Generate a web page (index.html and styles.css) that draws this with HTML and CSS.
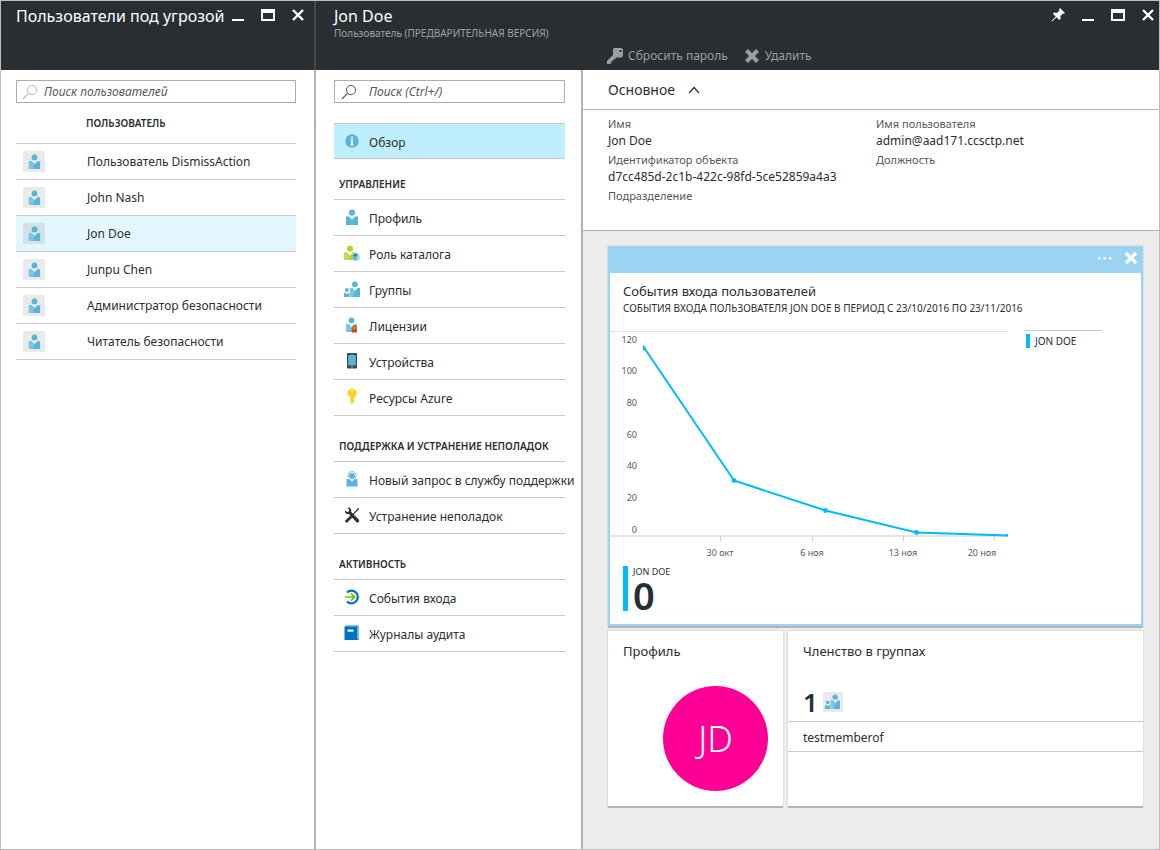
FILE: index.html
```
<!DOCTYPE html>
<html lang="ru">
<head>
<meta charset="utf-8">
<title>Jon Doe</title>
<link rel="stylesheet" href="styles.css">
</head>
<body>
<svg class="sprite" aria-hidden="true">
  <symbol id="user" viewBox="0 0 16 16">
    <circle cx="8" cy="3.6" r="3.1" fill="#59b4d9"/>
    <path d="M2 7.6h3l3 3.2 3-3.2h3V16H2z" fill="#59b4d9"/>
    <path d="M2 7.6h3l3 3.2L6.6 16H2z" fill="#7cc4e1"/>
  </symbol>
  <symbol id="profile" viewBox="0 0 16 16">
    <circle cx="8" cy="3.6" r="3.1" fill="#59b4d9"/>
    <path d="M2 7.6h3l3 3.2 3-3.2h3V16H2z" fill="#59b4d9"/>
  </symbol>
  <symbol id="group" viewBox="0 0 16 16">
    <circle cx="10.9" cy="3.3" r="2.9" fill="#59b4d9"/>
    <path d="M6.2 7h2.2l2.6 3 2.6-3H16v9H6.2z" fill="#59b4d9"/>
    <path d="M6.2 7h2.2l2.6 3-1.6 6H6.2z" fill="#7cc4e1"/>
    <circle cx="2.9" cy="9" r="1.9" fill="#59b4d9"/>
    <path d="M0 11.7h1.6l1.3 1.5 1.3-1.5h1.3V16H0z" fill="#59b4d9"/>
  </symbol>
  <symbol id="search" viewBox="0 0 16 16">
    <circle cx="10" cy="6" r="4.6" fill="none" stroke="currentColor"/>
    <path d="M6.6 9.4 1 15" fill="none" stroke="currentColor" stroke-width="1.2"/>
  </symbol>
  <symbol id="minimize" viewBox="0 0 14 14"><path d="M1 11h12v2H1z" fill="currentColor"/></symbol>
  <symbol id="maximize" viewBox="0 0 14 14"><path fill-rule="evenodd" d="M0 1h14v12H0zM2 5v6h10V5z" fill="currentColor"/></symbol>
  <symbol id="close" viewBox="0 0 14 14"><path d="m2 2 10 10M12 2 2 12" stroke="currentColor" stroke-width="2.4"/></symbol>
</svg>

<div class="portal">
  <section class="blade blade-users">
    <header class="blade-header">
      <div class="title-row">
        <h1 class="title">Пользователи под угрозой</h1>
        <div class="window-buttons">
          <button type="button" aria-label="Свернуть"><svg><use href="#minimize"/></svg></button>
          <button type="button" aria-label="Развернуть"><svg><use href="#maximize"/></svg></button>
          <button type="button" aria-label="Закрыть"><svg><use href="#close"/></svg></button>
        </div>
      </div>
    </header>
    <div class="users-body">
      <label class="search search-muted"><svg><use href="#search"/></svg><input type="text" placeholder="Поиск пользователей" aria-label="Поиск пользователей"></label>
      <table class="users">
        <thead><tr><td></td><th scope="col">ПОЛЬЗОВАТЕЛЬ</th></tr></thead>
        <tbody>
          <tr><td><span class="avatar"><svg><use href="#user"/></svg></span></td><td>Пользователь DismissAction</td></tr>
          <tr><td><span class="avatar"><svg><use href="#user"/></svg></span></td><td>John Nash</td></tr>
          <tr class="selected"><td><span class="avatar"><svg><use href="#user"/></svg></span></td><td>Jon Doe</td></tr>
          <tr><td><span class="avatar"><svg><use href="#user"/></svg></span></td><td>Junpu Chen</td></tr>
          <tr><td><span class="avatar"><svg><use href="#user"/></svg></span></td><td>Администратор безопасности</td></tr>
          <tr><td><span class="avatar"><svg><use href="#user"/></svg></span></td><td>Читатель безопасности</td></tr>
        </tbody>
      </table>
    </div>
  </section>

  <section class="blade blade-user">
    <header class="blade-header">
      <div class="title-row">
        <div>
          <h1 class="title">Jon Doe</h1>
          <p class="subtitle">Пользователь (ПРЕДВАРИТЕЛЬНАЯ ВЕРСИЯ)</p>
        </div>
        <div class="window-buttons">
          <button type="button" aria-label="Закрепить"><svg viewBox="0 0 14 14"><path fill="currentColor" d="M9 0l5 5-1.2.8-.8-.4-2.600 2.600.3 2.600-1.300 1.300L5.500 9.200 1 13.400l-.5-.4 4.200-4.500L1.900 5.800l1.300-1.300 2.700.4L8.500 2.200 8.200 1z"/></svg></button>
          <button type="button" aria-label="Свернуть"><svg><use href="#minimize"/></svg></button>
          <button type="button" aria-label="Развернуть"><svg><use href="#maximize"/></svg></button>
          <button type="button" aria-label="Закрыть"><svg><use href="#close"/></svg></button>
        </div>
      </div>
      <div class="commands">
        <button type="button"><svg viewBox="0 0 16 16"><path fill="currentColor" fill-rule="evenodd" d="M7 0h7.500L16 1.500V8l-1.500 1.500H9.500L7.500 11.500H6V13H4.500v1.500L3 16H0v-3l6-6V1zM12.500 2v2h2V2z"/></svg>Сбросить пароль</button>
        <button type="button"><svg viewBox="0 0 16 16"><path d="m2.500 2.500 11 11m0-11-11 11" stroke="currentColor" stroke-width="4"/></svg>Удалить</button>
      </div>
    </header>

    <div class="blade-body">
      <nav class="menu">
        <label class="search"><svg><use href="#search"/></svg><input type="text" placeholder="Поиск (Ctrl+/)" aria-label="Поиск"></label>
        <ul class="menu-top">
          <li><a href="#" class="active"><svg viewBox="0 0 16 16"><circle cx="8" cy="8" r="6.700" fill="#59b4d9"/><path fill="#e6f7fd" d="M7 3.600h2v1.800H7zM6.200 6.600H9v4.800h1v1H6v-1h1V7.600h-.8z"/></svg>Обзор</a></li>
        </ul>
        <h2>УПРАВЛЕНИЕ</h2>
        <ul>
          <li><a href="#"><svg><use href="#profile"/></svg>Профиль</a></li>
          <li><a href="#"><svg viewBox="0 0 16 16"><circle cx="6" cy="3.600" r="3.100" fill="#b8d432"/><path d="M.3 7.600h3L6 10.800l2.700-3.200h3V15H.3z" fill="#b8d432"/><path d="M.3 7.600h3L6 10.800 4.500 15H.3z" fill="#c5dc55"/><circle cx="12.300" cy="12.200" r="3.500" fill="#a0d3f0"/><path d="M9 11.200 12.300 12v3.600A3.500 3.500 0 0 1 9 11.200z" fill="#59b4d9"/><path d="M9 11a3.500 3.500 0 0 1 5-2.200L12.300 12z" fill="#1e88c9"/></svg>Роль каталога</a></li>
          <li><a href="#"><svg><use href="#group"/></svg>Группы</a></li>
          <li><a href="#"><svg viewBox="0 0 16 16"><circle cx="7.500" cy="3.300" r="2.900" fill="#59b4d9"/><path d="M2 7.300h3l2.500 3 2.500-3h3V15H2z" fill="#59b4d9"/><path d="M2 7.300h3l2.500 3L6.100 15H2z" fill="#7cc4e1"/><path d="M8.300 12h4.400v4l-2.200-1-2.200 1z" fill="#ba4316"/><circle cx="10.500" cy="11" r="2.400" fill="#dd5900"/><circle cx="10.500" cy="11" r="1.200" fill="#ff8c00"/></svg>Лицензии</a></li>
          <li><a href="#"><svg viewBox="0 0 16 16"><rect x="3" width="10" height="15.500" rx=".8" fill="#3e4347"/><path d="M4.200 2h7.600v10.500H4.200z" fill="#59b4d9"/><path d="M6.500.7h3v.5h-3zM7 13.600h2v1H7z" fill="#a0a1a2"/></svg>Устройства</a></li>
          <li><a href="#"><svg viewBox="0 0 16 16"><path fill="#fcd116" fill-rule="evenodd" d="M6.300 0h3.400L12.500 2.800v3L10.300 8.300v1.200l-.8.800.8.800-.8.900.8.800-2 2.300L6.500 14V8.300L3.500 5.800v-3zM7 1.200v1.300h2V1.200z"/></svg>Ресурсы Azure</a></li>
        </ul>
        <h2 class="spaced">ПОДДЕРЖКА И УСТРАНЕНИЕ НЕПОЛАДОК</h2>
        <ul>
          <li><a href="#"><svg viewBox="0 0 16 16"><path d="M2.500 8h3L8 10.500 10.500 8h3v7.500h-11z" fill="#59b4d9"/><circle cx="8" cy="5" r="2.900" fill="#59b4d9"/><path d="M4 6.500V4.200a4 3.700 0 0 1 8 0v2.100L8.500 8" fill="none" stroke="#7cc4e1"/></svg>Новый запрос в службу поддержки</a></li>
          <li><a href="#"><svg viewBox="0 0 16 16"><path d="M14.300.8 15.300 2 8.500 8.700l-.8-.8z" fill="#3e4347"/><path d="M7 8.200 8.800 10 3.300 15.500l-2-.1-.1-1.900z" fill="#292e32"/><path d="M3.500.6 5.700.7 7.200 2.600l-.1 2.200 8 8.300v1.500l-1 .8h-1.300L4.900 7.100 2.600 7 1 5.200l.1-1.700 2 1.600 1.700-.5.400-1.700z" fill="#292e32"/></svg>Устранение неполадок</a></li>
        </ul>
        <h2 class="spaced">АКТИВНОСТЬ</h2>
        <ul>
          <li><a href="#"><svg viewBox="0 0 16 16"><path d="M3 3.600a6.300 6.300 0 1 1 0 8.800" fill="none" stroke="#0072c6" stroke-width="2.200"/><path d="M1 8h9.500M7 4.300 10.700 8 7 11.700" fill="none" stroke="#7fba00" stroke-width="1.700"/></svg>События входа</a></li>
          <li><a href="#"><svg viewBox="0 0 16 16"><path d="M2 .5h12.500V15H.5V2z" fill="#0072c6"/><path d="M2 1.200h11.500V14" fill="none" stroke="#a9cce8" stroke-width=".7"/><path d="M3.500 4.500h6v2.200h-6z" fill="#fff"/></svg>Журналы аудита</a></li>
        </ul>
      </nav>

      <main class="content">
        <section class="essentials">
          <h2><button type="button">Основное<svg viewBox="0 0 12 12"><path d="m1 9 5-5.500L11 9" fill="none" stroke="currentColor" stroke-width="1.200"/></svg></button></h2>
          <div class="fields">
            <dl>
              <div><dt>Имя</dt><dd>Jon Doe</dd></div>
              <div><dt>Идентификатор объекта</dt><dd>d7cc485d-2c1b-422c-98fd-5ce52859a4a3</dd></div>
              <div><dt>Подразделение</dt><dd></dd></div>
            </dl>
            <dl>
              <div><dt>Имя пользователя</dt><dd>admin@aad171.ccsctp.net</dd></div>
              <div><dt>Должность</dt><dd></dd></div>
            </dl>
          </div>
        </section>

        <div class="tiles">
          <article class="tile tile-chart">
            <div class="tile-bar">
              <button type="button" aria-label="Ещё"><svg viewBox="0 0 14 14"><path fill="currentColor" d="M0 6h2.400v2.400H0zM5.500 6h2.400v2.400H5.500zM11 6h2.400v2.400H11z"/></svg></button>
              <button type="button" aria-label="Закрыть плитку"><svg viewBox="0 0 14 14"><path d="m2 2 10 10M12 2 2 12" stroke="currentColor" stroke-width="3.200"/></svg></button>
            </div>
            <div class="tile-heading">
              <h3>События входа пользователей</h3>
              <p>СОБЫТИЯ ВХОДА ПОЛЬЗОВАТЕЛЯ JON DOE В ПЕРИОД С 23/10/2016 ПО 23/11/2016</p>
            </div>
            <div class="chart-row">
              <svg class="chart" viewBox="0 0 398 230" role="img" aria-label="События входа">
                <path d="M0 .5h398" stroke="#dfe0e1"/>
                <path d="M0 205h398" stroke="#e4e5e6" stroke-width="2"/>
                <path d="M110.500 205v5M202.500 205v5M293.500 205v5M384.500 205v5" stroke="#d0d1d2"/>
                <g class="axis-y">
                  <text x="27" y="12">120</text><text x="27" y="43">100</text><text x="27" y="75">80</text><text x="27" y="107">60</text><text x="27" y="138">40</text><text x="27" y="170">20</text><text x="27" y="202">0</text>
                </g>
                <g class="axis-x">
                  <text x="110" y="225">30 окт</text><text x="202" y="225">6 ноя</text><text x="293" y="225">13 ноя</text><text x="372" y="225">20 ноя</text>
                </g>
                <path d="M34 16.500 124 149.500 215.500 179.500 306.500 201.500 398 204.500" fill="none" stroke="#00bcf2" stroke-width="2"/>
                <g fill="#00bcf2"><path d="M33 14.500a2.500 2.500 0 0 1 0 5z"/><circle cx="124" cy="149.500" r="2.400"/><circle cx="215.500" cy="179.500" r="2.400"/><circle cx="306.500" cy="201.500" r="2.400"/><circle cx="398" cy="204" r="1.500"/></g>
              </svg>
              <div class="legend"><span>JON DOE</span></div>
            </div>
            <div class="metric"><span>JON DOE</span><strong>0</strong></div>
          </article>

          <article class="tile tile-profile">
            <h3>Профиль</h3>
            <div class="initials">JD</div>
          </article>

          <article class="tile tile-groups">
            <h3>Членство в группах</h3>
            <div class="count"><strong>1</strong><span class="avatar"><svg><use href="#group"/></svg></span></div>
            <ul><li>testmemberof</li></ul>
          </article>
        </div>
      </main>
    </div>
  </section>
</div>
</body>
</html>
```
FILE: styles.css
```
* { box-sizing: border-box; }
body, h1, h2, h3, p, ul, dl, dd { margin: 0; padding: 0; }
body { font: 12px/16px "Noto Sans", "Open Sans", sans-serif; color: #292e32; background: #fff; }
ul { list-style: none; }
a { color: inherit; text-decoration: none; }
button { padding: 0; border: 0; background: none; font: inherit; color: inherit; cursor: pointer; }
svg { display: block; flex: none; width: 16px; height: 16px; }
.sprite { position: absolute; width: 0; height: 0; }

.portal { display: grid; grid-template-columns: 315px minmax(0, 1fr); min-height: 100vh; border: 1px solid #bbbdbe; }
.blade { display: flex; flex-direction: column; }
.blade-header { display: flex; flex-direction: column; height: 69px; padding: 5px 4px 5px 15px; background: #292e32; color: #fff; }
.blade-users { border-right: 2px solid #b2b3b4; }
.blade-users .blade-header { margin-right: -2px; padding-right: 9px; border-right: 2px solid #45494d; }
.blade-user .blade-header { padding-left: 18px; }
.title-row { display: flex; justify-content: space-between; align-items: flex-start; }
.title { font-size: 16px; line-height: 20px; font-weight: 400; white-space: nowrap; }
.subtitle { font-size: 10px; line-height: 14px; color: #a0a2a4; }
.window-buttons { display: flex; gap: 16px; padding-top: 2px; }
.window-buttons svg { width: 14px; height: 14px; }
.commands { display: flex; gap: 16px; padding-left: 273px; margin-top: 8px; color: #9c9ea0; }
.commands button { display: flex; align-items: center; gap: 5px; }

.search { display: flex; align-items: center; height: 23px; padding-left: 6px; gap: 12px; border: 1px solid #abadae; }
.search svg { color: #54585b; }
.search-muted { padding-left: 5px; gap: 6px; }
.search-muted svg { color: #b5b7b8; }
.search input { flex: 1; min-width: 0; padding: 0; border: 0; outline: 0; background: none; font: italic 12px/16px "Noto Sans", "Open Sans", sans-serif; color: inherit; }
.search input::placeholder { color: #54585b; opacity: 1; }

.users-body { padding: 10px 18px 10px 15px; }
.users { width: 100%; border-collapse: collapse; }
.users td, .users th { height: 36px; padding: 0; border-bottom: 1px solid #c6c8c9; text-align: left; }
.users thead th, .users thead td { height: 40px; }
.users th { font-size: 10px; font-weight: 600; }
.users td:first-child { width: 70px; padding-left: 7px; }
.users tbody td:last-child { padding: 2px 0 0 1px; }
.selected { background: #e5f7fe; }
.avatar { display: flex; align-items: center; justify-content: center; width: 22px; height: 21px; background: rgba(41, 46, 50, .1); }
.avatar svg { width: 15px; height: 15px; }

.blade-body { display: grid; grid-template-columns: 267px minmax(0, 1fr); flex: 1; }
.menu { padding: 10px 16px 10px 18px; border-right: 2px solid #b2b3b4; }
.menu-top { margin-top: 20px; border-top: 1px solid #c6c8c9; }
.menu a { display: flex; align-items: flex-start; gap: 9px; height: 36px; padding: 9px 0 0 10px; border-bottom: 1px solid #c6c8c9; line-height: 20px; white-space: nowrap; }
.menu .active { height: 35px; background: #bfeffd; }
.menu h2 { height: 41px; padding: 17px 0 0 5px; border-bottom: 1px solid #c6c8c9; font-size: 10px; line-height: 16px; font-weight: 600; white-space: nowrap; }
.menu .spaced { height: 46px; padding-top: 22px; }

.content { display: flex; flex-direction: column; background: #ededed; }
.essentials { min-height: 161px; background: #fff; border-bottom: 1px solid #b2b3b4; }
.essentials h2 { height: 40px; padding: 10px 25px; border-bottom: 1px solid #b2b3b4; font-size: 14px; line-height: 20px; font-weight: 400; }
.essentials h2 button { display: flex; align-items: center; gap: 13px; }
.essentials h2 svg { width: 12px; height: 12px; }
.fields { display: grid; grid-template-columns: 268px minmax(0, 1fr); padding: 6px 0 0 25px; }
.fields dl { display: grid; gap: 2px; align-content: start; }
.fields dt { font-size: 11px; color: #54585b; }
.fields dd { line-height: 18px; }

.tiles { display: grid; grid-template-columns: 175px minmax(0, 1fr); gap: 5px; padding: 15px 16px 15px 25px; }
.tile { background: #fff; box-shadow: 0 2px 0 #b5b5b5, 0 0 1px 1px #dfdfdf; }
.tile h3 { font-size: 13px; line-height: 20px; font-weight: 400; }
.tile-chart { grid-column: 1 / -1; height: 380px; border: 2px solid #9bd4f3; border-top: 0; }
.tile-bar { display: flex; justify-content: flex-end; align-items: center; gap: 12px; height: 27px; padding: 0 3px 3px 0; background: #9bd4f3; color: #fff; }
.tile-bar svg { width: 14px; height: 14px; }
.tile-heading { height: 57px; padding: 8px 13px 0; }
.tile-heading p { font-size: 10px; line-height: 14px; }
.chart-row { display: flex; gap: 16px; align-items: flex-start; }
.chart { width: 398px; height: 230px; margin-top: 1px; font-size: 9px; fill: #54585b; }
.axis-y { text-anchor: end; }
.axis-x { text-anchor: middle; }
.legend { width: 78px; padding: 3px 2px; border-top: 1px solid #c6c8c9; font-size: 10px; line-height: 14px; }
.legend span { display: block; padding-left: 5px; border-left: 4px solid #00bcf2; }
.metric { display: flex; flex-direction: column; width: 100px; height: 45px; margin: 5px 13px 0; padding-left: 5px; border-left: 5px solid #00bcf2; font-size: 9px; line-height: 11px; }
.metric strong { font-size: 38px; line-height: 36px; font-weight: 600; }
.tile-profile, .tile-groups { min-height: 175px; }
.tile-profile { padding: 10px 15px; }
.initials { display: grid; place-items: center; width: 105px; height: 105px; margin: 25px 0 0 auto; border-radius: 50%; background: #ff0097; color: #fff; font-size: 36px; font-weight: 300; }
.tile-groups h3 { padding: 10px 15px 0; }
.count { display: flex; align-items: center; gap: 5px; height: 61px; padding: 21px 15px 0; border-bottom: 1px solid #c6c8c9; }
.count strong { font-size: 26px; line-height: 30px; font-weight: 600; }
.count .avatar { width: 20px; height: 20px; }
.tile-groups li { height: 30px; padding: 8px 15px 5px; border-bottom: 1px solid #c6c8c9; }
```
